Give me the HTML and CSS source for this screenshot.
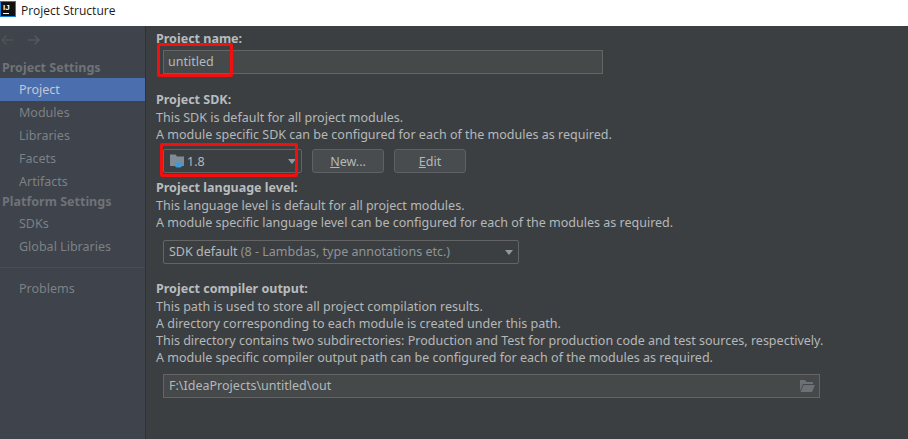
FILE: index.html
```html
<!DOCTYPE html>
<html lang="en">
<head>
<meta charset="utf-8">
<title>Project Structure</title>
<link rel="stylesheet" href="styles.css">
</head>
<body>
<header class="titlebar">
  <div class="app-icon"><span>IJ</span><b></b></div>
  <div class="title">Project Structure</div>
</header>
<div class="main">
  <aside class="sidebar">
    <div class="nav-arrows">
      <svg width="14" height="12" viewBox="0 0 14 12"><path d="M13 6H2M6.500 1.500 2 6l4.500 4.500" fill="none" stroke="#4f5356" stroke-width="1.600"/></svg>
      <svg width="14" height="12" viewBox="0 0 14 12"><path d="M1 6h11M7.500 1.500 12 6l-4.500 4.500" fill="none" stroke="#55595c" stroke-width="1.600"/></svg>
    </div>
    <div class="group">Project Settings</div>
    <div class="item active">Project</div>
    <div class="item">Modules</div>
    <div class="item">Libraries</div>
    <div class="item">Facets</div>
    <div class="item">Artifacts</div>
    <div class="group group-second">Platform Settings</div>
    <div class="item">SDKs</div>
    <div class="item">Global Libraries</div>
    <div class="divider"></div>
    <div class="item">Problems</div>
  </aside>
  <section class="content">
    <div class="label">Project name:</div>
    <div class="field name-field">untitled</div>

    <div class="label sdk-label">Project SDK:</div>
    <div class="text">This SDK is default for all project modules.</div>
    <div class="text">A module specific SDK can be configured for each of the modules as required.</div>
    <div class="sdk-row">
      <div class="select sdk-select">
        <svg class="sdk-icon" width="16" height="16" viewBox="0 0 16 16">
          <path d="M1 1.500h5.500L8 3.500h7V13H1z" fill="#7f8b95"/>
          <path d="M6 9.500h7v3a2 2 0 0 1-2 2H8a2 2 0 0 1-2-2z" fill="#3d9bd6"/>
          <path d="M13 10.500h1.500v1.500H13" fill="none" stroke="#3d9bd6"/>
        </svg>
        <span class="select-text">1.8</span>
        <i class="caret"></i>
      </div>
      <button class="btn new-btn"><u>N</u>ew...</button>
      <button class="btn"><u>E</u>dit</button>
    </div>

    <div class="label lang-label">Project language level:</div>
    <div class="text">This language level is default for all project modules.</div>
    <div class="text">A module specific language level can be configured for each of the modules as required.</div>
    <div class="select lang-select">
      <span class="select-text">SDK default <span class="muted">(8 - Lambdas, type annotations etc.)</span></span>
      <i class="caret"></i>
    </div>

    <div class="label output-label">Project compiler output:</div>
    <div class="text">This path is used to store all project compilation results.</div>
    <div class="text">A directory corresponding to each module is created under this path.</div>
    <div class="text">This directory contains two subdirectories: Production and Test for production code and test sources, respectively.</div>
    <div class="text">A module specific compiler output path can be configured for each of the modules as required.</div>
    <div class="field path-field">
      <span>F:\IdeaProjects\untitled\out</span>
      <svg width="16" height="14" viewBox="0 0 16 14"><path d="M1 1h5l1.500 2H14v2H4L1 12z" fill="#6b7174"/><path d="M4.500 6H16l-3 7H1.500z" fill="#6b7174"/></svg>
    </div>
  </section>
</div>
<div class="mark mark-name"></div>
<div class="mark mark-sdk"></div>
</body>
</html>
```
FILE: styles.css
```css
* { box-sizing: border-box; }
html, body { margin: 0; padding: 0; }
body {
  width: 908px;
  height: 439px;
  overflow: hidden;
  position: relative;
  background: #3c3f41;
  font-family: "Noto Sans", "Open Sans", sans-serif;
  font-size: 12.53px;
  color: #b4b8ba;
}
.titlebar {
  height: 26px;
  background: #fff;
  display: flex;
  align-items: flex-start;
  gap: 5px;
  padding: 1px 0 0 0;
}
.app-icon {
  width: 16px;
  height: 16px;
  background: #111;
  border: 1px solid #1c7fd6;
  position: relative;
}
.app-icon span {
  display: block;
  font: bold 8px/9px "Liberation Sans", sans-serif;
  color: #fff;
  padding: 1px 0 0 2px;
}
.app-icon b {
  position: absolute;
  left: 2px;
  bottom: 2px;
  width: 6px;
  height: 1px;
  background: #fff;
}
.title {
  font-family: "Open Sans", sans-serif;
  font-size: 12px;
  line-height: 20px;
  color: #1a1a1a;
}
.main { display: flex; height: 413px; }
.sidebar {
  width: 146px;
  flex: none;
  background: #3e434c;
  border-right: 1px solid #2f3234;
}
.nav-arrows {
  height: 31px;
  padding-bottom: 3px;
  display: flex;
  align-items: center;
  gap: 13px;
}
.group {
  height: 21px;
  line-height: 21px;
  padding-left: 2px;
  font-weight: 700;
  color: #6f7377;
}
.group-second { height: 19px; line-height: 18px; }
.item {
  height: 23px;
  line-height: 23px;
  padding-left: 19px;
  color: #7c8185;
}
.item.active { background: #4b6eaf; color: #c2c8d0; }
.divider {
  height: 1px;
  margin: 9px 0;
  background: #494c50;
}
.content { flex: 1; padding: 4px 0 0 10px; }
.label {
  font-weight: 700;
  color: #b8bcbe;
  line-height: 18px;
}
.text { line-height: 17px; color: #b4b8ba; }
.sdk-label { margin-top: 17px; }
.lang-label { margin-top: 6px; }
.output-label { margin-top: 16px; }
.field {
  background: #45494a;
  border: 1px solid #646464;
  height: 24px;
  line-height: 22px;
  padding-left: 4px;
}
.name-field { width: 440px; margin: 2px 0 0 7px; }
.path-field {
  width: 657px;
  margin: 8px 0 0 7px;
  padding-left: 5px;
  padding-right: 4px;
  display: flex;
  justify-content: space-between;
  align-items: center;
}
.select {
  height: 24px;
  border: 1px solid #646464;
  border-radius: 2px;
  background: #3c3f41;
  display: flex;
  align-items: center;
  position: relative;
  padding-left: 5px;
}
.select-text { color: #b4b8ba; }
.muted { color: #8f9496; }
.caret {
  position: absolute;
  right: 5px;
  top: 9px;
  width: 0;
  height: 0;
  border: 4.500px solid transparent;
  border-top: 5px solid #93989a;
  border-bottom: 0;
}
.sdk-row {
  display: flex;
  align-items: center;
  margin: 6px 0 0 7px;
  height: 24px;
}
.sdk-select { width: 139px; gap: 2px; }
.btn {
  font: inherit;
  color: #b4b8ba;
  height: 24px;
  width: 72px;
  border: 1px solid #5e6264;
  border-radius: 3px;
  background: #484c4e;
  padding: 0;
}
.new-btn { margin: 0 10px 0 10px; }
.lang-select { width: 356px; margin: 9px 0 0 7px; padding-bottom: 2px; }
.mark {
  position: absolute;
  border: 3px solid #f01010;
  border-radius: 2px;
}
.mark-name { left: 157px; top: 43px; width: 76px; height: 34px; }
.mark-sdk { left: 160px; top: 143px; width: 138px; height: 34px; }
```
